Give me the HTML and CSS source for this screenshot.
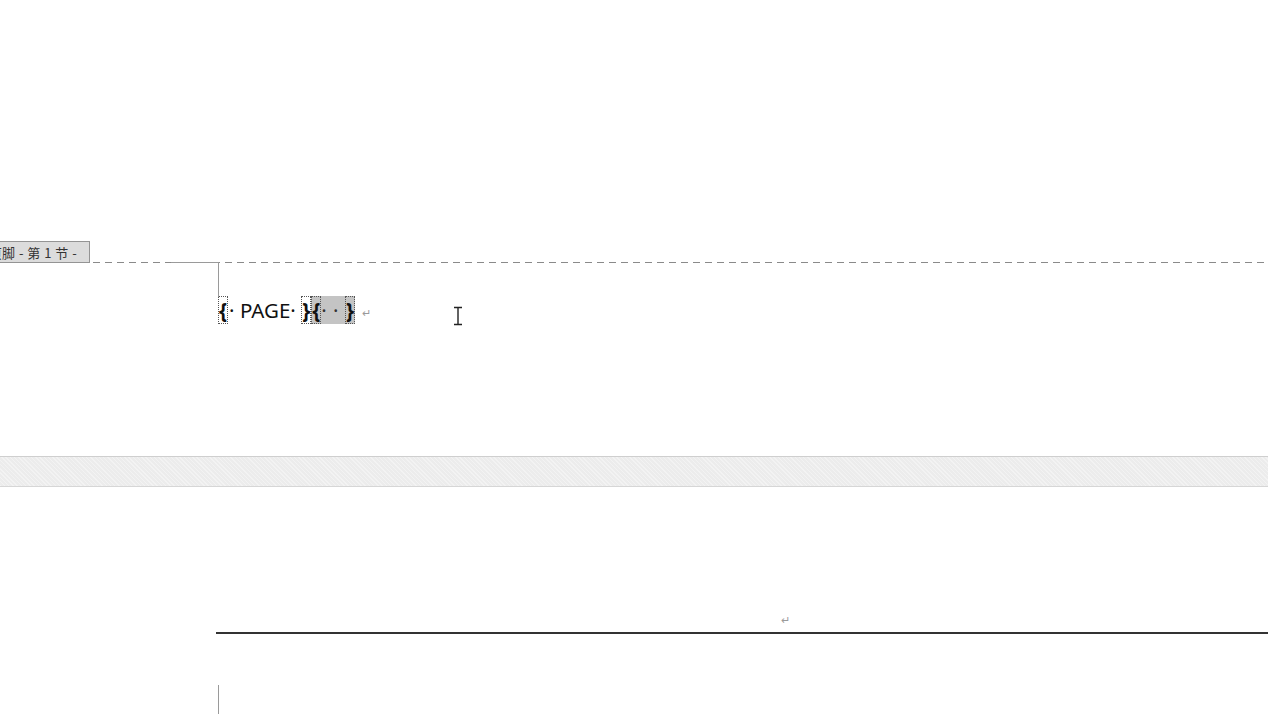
FILE: index.html
```html
<!DOCTYPE html>
<html lang="zh">
<head>
<meta charset="utf-8">
<title>页脚</title>
<link rel="stylesheet" href="styles.css">
</head>
<body>
<div class="page page-one">
  <div class="footer-head">
    <div class="tab"><span class="tab-text">页脚 - 第 1 节 -</span></div>
    <div class="dash-wrap"><div class="corner-h"></div><div class="dash"></div></div>
  </div>
  <div class="footer-body">
    <div class="corner-v"></div>
    <p class="field"><span class="brace box">{</span><span class="txt">· PAGE· </span><span class="brace box">}</span><span class="shade"><span class="brace box">{</span><span class="dots">· · </span><span class="brace box">}</span></span><span class="pmark">↵</span></p>
  </div>
  <div class="ibeam">
    <svg width="10" height="20" viewBox="0 0 10 20"><path d="M1 1.5h8M5 1.5v17M1 18.5h8" stroke="#222" stroke-width="1.4" fill="none"/></svg>
  </div>
</div>
<div class="gap"></div>
<div class="page page-two">
  <div class="header-para"><span class="pmark">↵</span></div>
  <div class="corner-v2"></div>
</div>
</body>
</html>
```
FILE: styles.css
```css
html, body {
  margin: 0;
  padding: 0;
  background: #ffffff;
  overflow: hidden;
}
body {
  width: 1268px;
  height: 714px;
  font-family: "Noto Sans", "Liberation Sans", "Noto Sans CJK SC", sans-serif;
}
.page {
  position: relative;
  background: #ffffff;
}
.page-one {
  height: 456px;
  padding-top: 241px;
  box-sizing: border-box;
}
.footer-head {
  display: flex;
  align-items: flex-end;
  height: 22px;
}
.tab {
  width: 90px;
  height: 22px;
  box-sizing: border-box;
  background: #dcdcdc;
  border: 1px solid #949494;
  border-left: none;
  overflow: hidden;
  display: flex;
  align-items: center;
  font-family: "Noto Sans CJK SC", sans-serif;
  font-size: 13px;
  color: #333333;
  white-space: nowrap;
}
.tab-text {
  margin-left: -11px;
  word-spacing: 1px;
}
.dash-wrap {
  flex: 1;
  position: relative;
  height: 1px;
  margin-left: 3px;
}
.dash {
  height: 1px;
  background: repeating-linear-gradient(to right, #8a8a8a 0 7px, transparent 7px 12px);
}
.corner-h {
  position: absolute;
  left: 78px;
  top: 0;
  width: 48px;
  height: 1px;
  background: #9a9a9a;
}
.footer-body {
  position: relative;
  padding-left: 218px;
  padding-top: 33px;
}
.corner-v {
  position: absolute;
  left: 218px;
  top: 0;
  width: 1px;
  height: 34px;
  background: #9a9a9a;
}
.field {
  margin: 0;
  display: flex;
  align-items: stretch;
  height: 28px;
  font-size: 20.5px;
  line-height: 28px;
  color: #111;
  white-space: pre;
}
.txt {
  padding-left: 1px;
}
.brace {
  font-weight: bold;
}
.box {
  outline: 1px dotted #555;
  outline-offset: -1px;
  padding: 0 1px;
}
.shade {
  display: flex;
  background: #c4c4c4;
}
.dots {
  color: #333;
  letter-spacing: 0.5px;
}
.pmark {
  font-size: 11px;
  color: #9a9a9a;
  margin-left: 7px;
  align-self: center;
  line-height: 12px;
  padding-top: 6px;
}
.ibeam {
  position: absolute;
  left: 453px;
  top: 306px;
  width: 10px;
  height: 20px;
}
.ibeam svg {
  display: block;
}
.gap {
  height: 29px;
  border-top: 1px solid #cfcfcf;
  border-bottom: 1px solid #d6d6d6;
  background-color: #ececec;
  background-image: repeating-linear-gradient(45deg, rgba(255,255,255,0.35) 0 1px, transparent 1px 3px);
}
.page-two {
  height: 227px;
  padding-top: 145px;
  box-sizing: border-box;
}
.header-para {
  margin-left: 216px;
  height: 0;
  border-bottom: 2px solid #333;
  position: relative;
  text-align: center;
}
.header-para .pmark {
  position: absolute;
  left: 565px;
  top: -18px;
  margin: 0;
  padding: 0;
}
.corner-v2 {
  position: absolute;
  left: 218px;
  top: 198px;
  width: 1px;
  height: 40px;
  background: #9a9a9a;
}
```
